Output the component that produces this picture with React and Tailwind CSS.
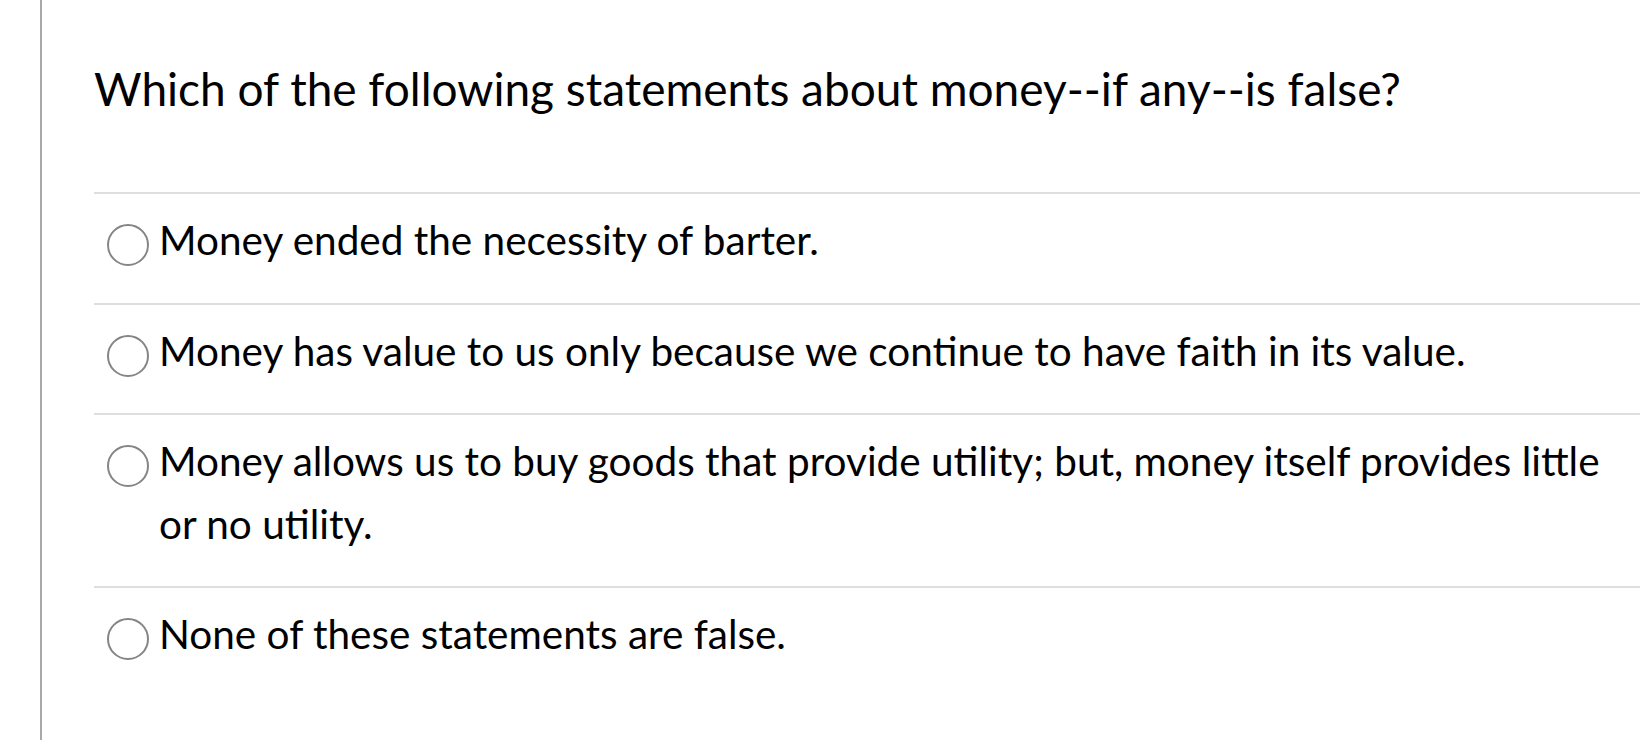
const answers = [
  'Money ended the necessity of barter.',
  'Money has value to us only because we continue to have faith in its value.',
  'Money allows us to buy goods that provide utility; but, money itself provides little or no utility.',
  'None of these statements are false.',
];

export default function App() {
  return (
    <div
      className="flex h-[740px] w-[1640px] overflow-hidden bg-white text-black"
      style={{ fontFamily: 'Lato, "Noto Sans", sans-serif' }}
    >
      <div className="w-[42px] shrink-0 border-r-2 border-[#a9a9a9]" />

      <div className="flex-1 pl-[52px]">
        <h1 className="pt-[61px] text-[46px] leading-[1.2] font-normal">
          Which of the following statements about money--if any--is false?
        </h1>

        <div className="mt-[76px]">
          {answers.map((text) => (
            <label
              key={text}
              className="flex items-start border-t-2 border-[#dedede] pt-[15px] pb-[31px] pl-[13px] pr-[20px]"
            >
              <span className="mt-[15px] mr-[10px] h-[42px] w-[42px] shrink-0 rounded-full border-2 border-[#858585]" />
              <span className="text-[40.5px] leading-[62.5px]">{text}</span>
            </label>
          ))}
        </div>
      </div>
    </div>
  );
}
